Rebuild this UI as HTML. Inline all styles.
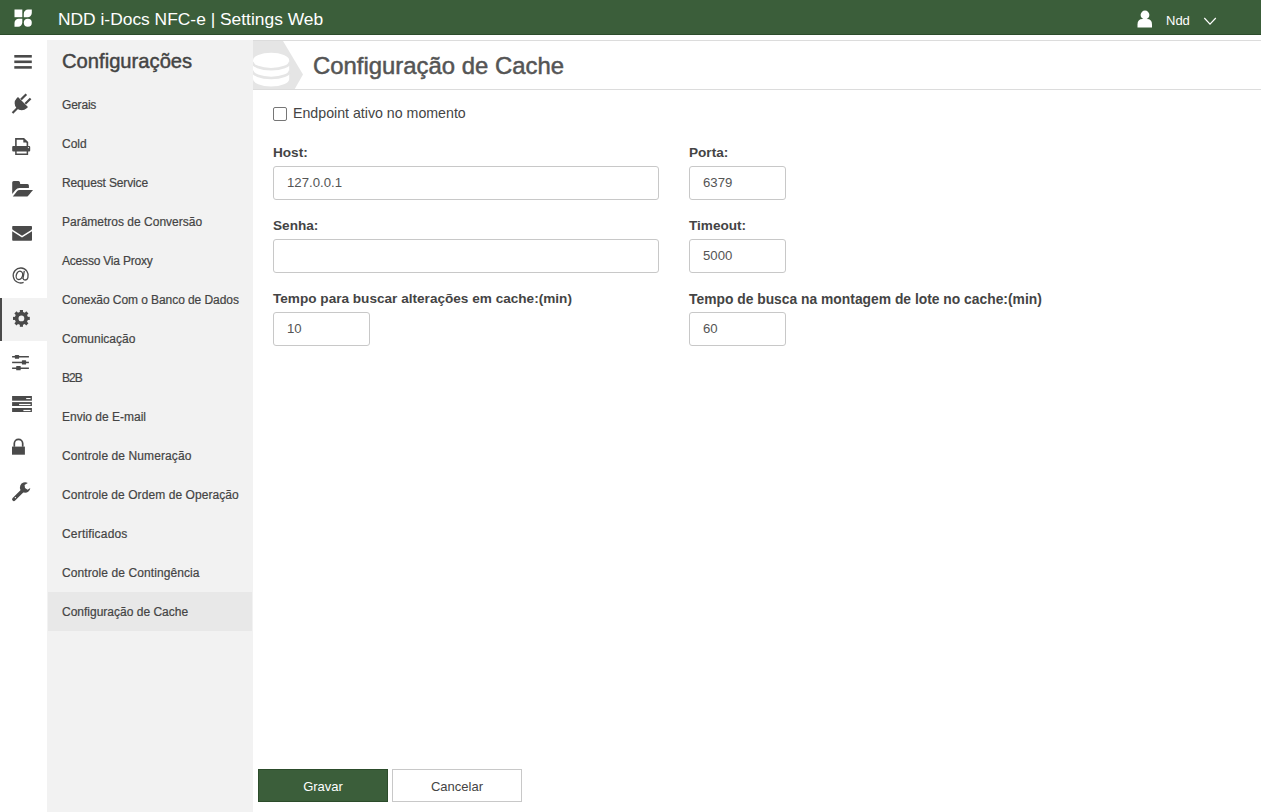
<!DOCTYPE html>
<html><head><meta charset="utf-8">
<style>
*{box-sizing:border-box;margin:0;padding:0}
html,body{width:1261px;height:812px;overflow:hidden;background:#fff;font-family:"Liberation Sans",sans-serif;color:#4a4a4a}
.abs{position:absolute}
#hdr{position:absolute;left:0;top:0;width:1261px;height:35px;background:#3b5e3a;border-bottom:1px solid #2c4c2b}
#title{position:absolute;left:58px;top:9px;font-size:17.4px;color:#fff;white-space:nowrap;line-height:20px}
#user{position:absolute;left:1166px;top:13px;font-size:13px;color:#fff;line-height:16px}
#rail{position:absolute;left:0;top:35px;width:47px;height:777px;background:#fff}
#side{position:absolute;left:47px;top:40px;width:206px;height:772px;background:#f2f2f2}
#side h2{position:absolute;left:15px;top:10px;font-size:20.2px;font-weight:normal;-webkit-text-stroke:0.45px #444;color:#444;white-space:nowrap;line-height:22px}
.mi{position:absolute;left:1px;width:204px;height:39px;font-size:12px;color:#444;-webkit-text-stroke:0.2px #444;padding-left:14px;line-height:39px;white-space:nowrap}
.mi.act{background:#e8e8e8;line-height:41px}
#ph{position:absolute;left:253px;top:40px;width:1008px;height:50px;border-top:1px solid #dcdcdc;border-bottom:1px solid #dcdcdc;overflow:hidden}
#ph h1{position:absolute;left:60px;top:12px;font-size:23.9px;font-weight:normal;-webkit-text-stroke:0.5px #555;color:#555;white-space:nowrap;line-height:26px}
.lbl{position:absolute;font-size:13.6px;font-weight:bold;color:#444;white-space:nowrap;line-height:16px}
.inp{position:absolute;height:34px;border:1px solid #c8c8c8;border-radius:3px;background:#fff;font-size:13.2px;color:#555;padding-left:13px;line-height:32px}
.btn{position:absolute;top:769px;width:130px;height:33px;font-size:13px;text-align:center;line-height:33px}
</style></head><body>
<div id="hdr">
  <svg class="abs" style="left:0;top:0" width="40" height="35" viewBox="0 0 40 35">
    <g fill="#fff">
      <rect x="14.5" y="9.5" width="7.8" height="7.7"/>
      <path d="M23.8,17.2 V13.7 A4.2,4.2 0 0 1 28,9.5 H31.8 V13 A4.2,4.2 0 0 1 27.6,17.2 Z"/>
      <path d="M14.5,26.8 V23 A4.2,4.2 0 0 1 18.7,18.8 H22.3 V22.6 A4.2,4.2 0 0 1 18.1,26.8 Z"/>
      <circle cx="27.8" cy="22.8" r="4"/>
    </g>
  </svg>
  <div id="title">NDD i-Docs NFC-e | Settings Web</div>
  <svg class="abs" style="left:1130px;top:0" width="100" height="35" viewBox="1130 0 100 35">
    <g fill="#fff">
      <circle cx="1145" cy="15" r="4.4"/>
      <path d="M1137.5,27.6 V24.5 Q1137.5,19 1142.5,19 H1147 Q1152,19 1152,24.5 V27.6 Z"/>
    </g>
    <path d="M1204.3,18 L1210,24.2 L1215.8,18" fill="none" stroke="#fff" stroke-width="1.2"/>
  </svg>
  <div id="user">Ndd</div>
</div>
<div id="rail"></div>
<div class="abs" style="left:0;top:298px;width:47px;height:43px;background:#f2f2f2"></div>
<div class="abs" style="left:0;top:298px;width:2px;height:43px;background:#4a4a4a"></div>
<svg class="abs" style="left:0;top:0" width="47" height="812" viewBox="0 0 47 812">
  <g fill="#4a4a4a">
    <!-- hamburger -->
    <rect x="14.3" y="55" width="17.5" height="2.6"/>
    <rect x="14.3" y="60.5" width="17.5" height="2.6"/>
    <rect x="14.3" y="66.1" width="17.5" height="2.6"/>
    <!-- plug -->
    <path d="M18,97 L28,107 L26.7,108.3 A7.07,7.07 0 0 1 16.7,98.3 Z"/>
    <path d="M12.5,113 L18.5,107" stroke="#4a4a4a" stroke-width="2.2"/>
    <path d="M21,99.5 L26.3,94.2 M25.3,103.8 L30.6,98.5" stroke="#4a4a4a" stroke-width="2.2"/>
    <!-- printer -->
    <path d="M15.9,147 V138.9 H23.7 L27.4,142.3 V147" fill="none" stroke="#4a4a4a" stroke-width="1.6"/>
    <path d="M23.3,138.5 V142.5 H27.6 Z"/>
    <rect x="12.2" y="145.9" width="18" height="5.6" rx="1"/>
    <path d="M15.9,151 V154.2 H27.4 V151" fill="none" stroke="#4a4a4a" stroke-width="1.5"/>
    <!-- folder -->
    <path d="M12.2,194 V182.5 Q12.2,181 13.7,181 H18.5 Q19.8,181 20,182.5 L20.2,184 H27.5 Q28.9,184 28.9,185.5 V188 H19.5 Q17,188 15.5,190 Z"/>
    <path d="M12.8,196.5 L17.2,191 Q18,190.1 19.5,190.1 H33 L28,196 Q27.4,196.5 26.5,196.5 Z"/>
    <!-- envelope -->
    <path d="M12.2,226.8 Q12.2,226 13,226 H31.2 Q32,226 32,226.8 V229 Q31.8,229.5 31.2,229.9 L22,235.8 L13,229.9 Q12.4,229.5 12.2,229 Z"/>
    <path d="M12.2,231.3 L22,237.5 L32,231.3 V240 Q32,240.7 31.2,240.7 H13 Q12.2,240.7 12.2,240 Z"/>
    <!-- gear -->
    <g transform="translate(21.4,318.4)">
      <path fill-rule="evenodd" d="M-1.3,-8.3 H1.3 V-6 H-1.3 Z"/>
    </g>
    <!-- sliders -->
    <rect x="12.1" y="356" width="16.8" height="1.5"/>
    <rect x="12.1" y="361.7" width="16.8" height="1.5"/>
    <rect x="12.1" y="367.5" width="16.8" height="1.5"/>
    <rect x="14.9" y="354.9" width="4.2" height="3.9" rx="0.6"/>
    <rect x="21.9" y="360.2" width="4.2" height="4.4" rx="0.6"/>
    <rect x="16.2" y="366" width="4.5" height="4.3" rx="0.6"/>
    <!-- server -->
    <rect x="12.1" y="396" width="19.8" height="4.7"/>
    <rect x="12.1" y="402.1" width="19.8" height="3.9"/>
    <rect x="12.1" y="408" width="19.8" height="4"/>
    <!-- lock -->
    <rect x="12" y="446.6" width="12.9" height="8.1"/>
    <!-- wrench -->
    <path d="M13.9,499.3 L22.5,490.7" stroke="#4a4a4a" stroke-width="3.6" stroke-linecap="round"/>
  </g>
  <g fill="#fff">
    <rect x="26.2" y="398" width="4.4" height="1.1"/>
    <rect x="19.1" y="403.9" width="11.5" height="1.2"/>
    <rect x="23.4" y="409.9" width="7.2" height="1.2"/>
    <circle cx="15.4" cy="497.6" r="0.7"/>
    <circle cx="28.4" cy="147.6" r="0.6"/>
  </g>
  <!-- at -->
  <g fill="none" stroke="#4a4a4a" stroke-width="1.3">
    <path d="M23.6,282.4 A7.5,7.5 0 1 1 27.9,277.6 Q27.2,280 25,280 Q23.2,280 23.2,278.5"/>
    <ellipse cx="19.4" cy="275.4" rx="3.1" ry="4.3" transform="rotate(18 19.4 275.4)"/>
    <path d="M24.3,270.8 L22.9,279"/>
  </g>
  <!-- lock shackle -->
  <path d="M14.3,446.8 V443.5 A4.2,4.2 0 0 1 22.7,443.5 V446.8" fill="none" stroke="#4a4a4a" stroke-width="1.7"/>
  <!-- gear full -->
  <g transform="translate(21.4,318.4)" fill="#4a4a4a">
    <g id="teeth">
      <rect x="-1.55" y="-8.4" width="3.1" height="4"/>
      <rect x="-1.55" y="-8.4" width="3.1" height="4" transform="rotate(45)"/>
      <rect x="-1.55" y="-8.4" width="3.1" height="4" transform="rotate(90)"/>
      <rect x="-1.55" y="-8.4" width="3.1" height="4" transform="rotate(135)"/>
      <rect x="-1.55" y="-8.4" width="3.1" height="4" transform="rotate(180)"/>
      <rect x="-1.55" y="-8.4" width="3.1" height="4" transform="rotate(225)"/>
      <rect x="-1.55" y="-8.4" width="3.1" height="4" transform="rotate(270)"/>
      <rect x="-1.55" y="-8.4" width="3.1" height="4" transform="rotate(315)"/>
    </g>
    <path fill-rule="evenodd" d="M0,-6.6 A6.6,6.6 0 1 1 0,6.6 A6.6,6.6 0 1 1 0,-6.6 Z M0,-2.9 A2.9,2.9 0 1 0 0,2.9 A2.9,2.9 0 1 0 0,-2.9 Z"/>
  </g>
  <!-- wrench head -->
  <path fill="#4a4a4a" fill-rule="evenodd" d="M27.8,483.1 A5.2,5.2 0 1 0 30.3,487.9 L27.6,489.8 L25,488 L24.6,485 Z"/>
</svg>

<div id="side">
  <h2>Configurações</h2>
  <div class="mi" style="top:46px;letter-spacing:-0.2px">Gerais</div>
  <div class="mi" style="top:85px">Cold</div>
  <div class="mi" style="top:124px;letter-spacing:-0.14px">Request Service</div>
  <div class="mi" style="top:163px">Parâmetros de Conversão</div>
  <div class="mi" style="top:202px;letter-spacing:-0.2px">Acesso Via Proxy</div>
  <div class="mi" style="top:241px;letter-spacing:-0.07px">Conexão Com o Banco de Dados</div>
  <div class="mi" style="top:280px">Comunicação</div>
  <div class="mi" style="top:319px;letter-spacing:-1px">B2B</div>
  <div class="mi" style="top:358px">Envio de E-mail</div>
  <div class="mi" style="top:397px;letter-spacing:0.1px">Controle de Numeração</div>
  <div class="mi" style="top:436px;letter-spacing:0.07px">Controle de Ordem de Operação</div>
  <div class="mi" style="top:475px;letter-spacing:0.18px">Certificados</div>
  <div class="mi" style="top:514px;letter-spacing:0.09px">Controle de Contingência</div>
  <div class="mi act" style="top:552px">Configuração de Cache</div>
</div>
<div id="ph">
  <svg class="abs" style="left:0;top:-1px" width="60" height="50" viewBox="253 40 60 50">
    <path d="M253,41 H283 L303,74.6 L293,92 H253 Z" fill="#e5e5e5"/>
    <path d="M253,60.3 A18.1,7.6 0 0 1 289.2,60.3 V80 L289.2,79 A18.1,7.6 0 0 1 253,79 Z" fill="#fff"/>
    <path d="M252.2,61.7 A18.9,7.6 0 0 0 290,61.7 M252.2,70.4 A18.9,7.6 0 0 0 290,70.4" fill="none" stroke="#e5e5e5" stroke-width="2.6"/>
  </svg>
  <h1>Configuração de Cache</h1>
</div>
<div class="abs" style="left:273px;top:107px;width:14px;height:14px;border:1px solid #767676;border-radius:2px;background:#fff"></div>
<div class="abs" style="left:293px;top:104px;font-size:14.2px;color:#444;white-space:nowrap;line-height:18px">Endpoint ativo no momento</div>
<div class="lbl" style="left:273px;top:145px">Host:</div>
<div class="inp" style="left:273px;top:166px;width:386px">127.0.0.1</div>
<div class="lbl" style="left:689px;top:145px">Porta:</div>
<div class="inp" style="left:689px;top:166px;width:97px">6379</div>
<div class="lbl" style="left:273px;top:218px">Senha:</div>
<div class="inp" style="left:273px;top:239px;width:386px"></div>
<div class="lbl" style="left:689px;top:218px">Timeout:</div>
<div class="inp" style="left:689px;top:239px;width:97px">5000</div>
<div class="lbl" style="left:273px;top:291px">Tempo para buscar alterações em cache:(min)</div>
<div class="inp" style="left:273px;top:312px;width:97px">10</div>
<div class="lbl" style="left:689px;top:291px;font-size:13.85px">Tempo de busca na montagem de lote no cache:(min)</div>
<div class="inp" style="left:689px;top:312px;width:97px">60</div>
<div class="btn" style="left:258px;background:#3b5e3a;border:1px solid #2c4c2b;color:#fff">Gravar</div>
<div class="btn" style="left:392px;background:#fff;border:1px solid #c8c8c8;color:#444">Cancelar</div>
</body></html>
